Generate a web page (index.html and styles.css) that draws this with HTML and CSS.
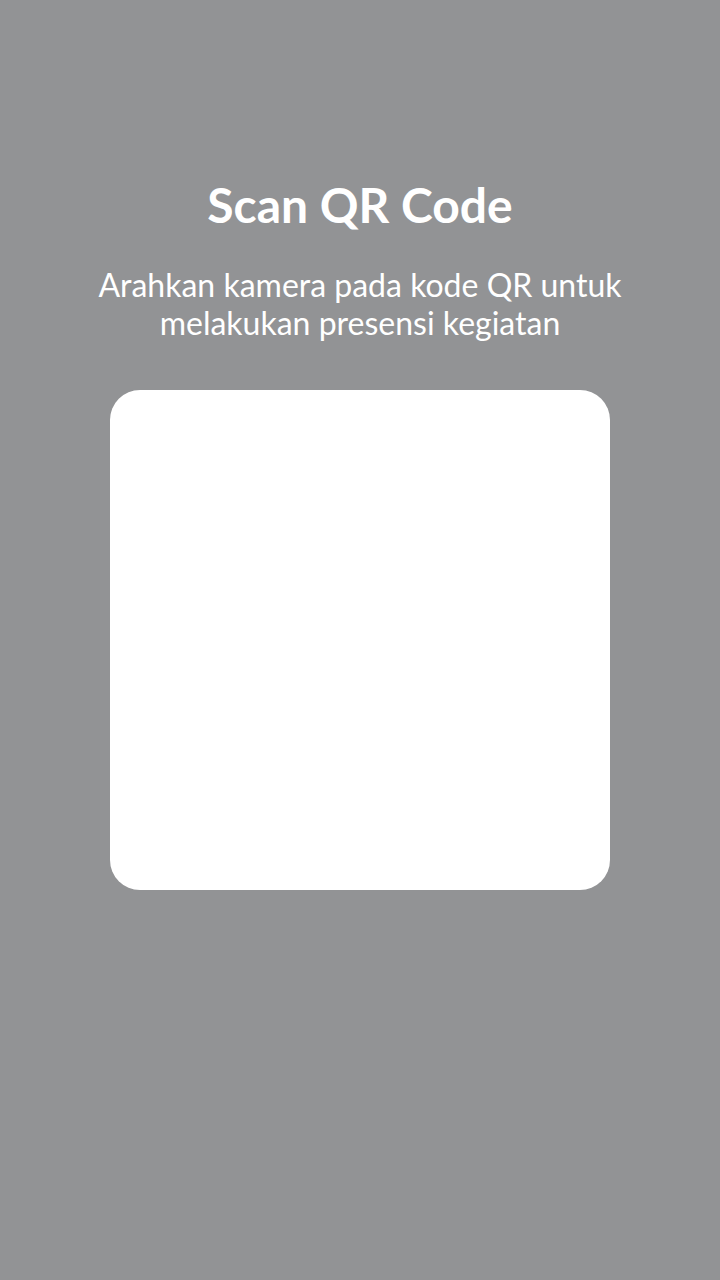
FILE: index.html
```html
<!DOCTYPE html>
<html>
<head>
<meta charset="utf-8">
<link rel="stylesheet" href="styles.css">
</head>
<body>
<main class="screen">
  <h1 class="title">Scan QR Code</h1>
  <p class="subtitle">Arahkan kamera pada kode QR untuk<br>melakukan presensi kegiatan</p>
  <div class="scanner"></div>
</main>
</body>
</html>
```
FILE: styles.css
```css
html, body {
  margin: 0;
  padding: 0;
  background: #929395;
}
.screen {
  width: 720px;
  height: 1280px;
  display: flex;
  flex-direction: column;
  align-items: center;
  font-family: Lato, "Noto Sans", sans-serif;
  color: #ffffff;
}
.title {
  margin: 175px 0 0;
  font-size: 48px;
  font-weight: 700;
  line-height: 60px;
}
.subtitle {
  margin: 31px 0 0;
  font-size: 32px;
  font-weight: 400;
  line-height: 38px;
  text-align: center;
}
.scanner {
  margin-top: 48px;
  width: 500px;
  height: 500px;
  background: #ffffff;
  border-radius: 30px;
}
```
